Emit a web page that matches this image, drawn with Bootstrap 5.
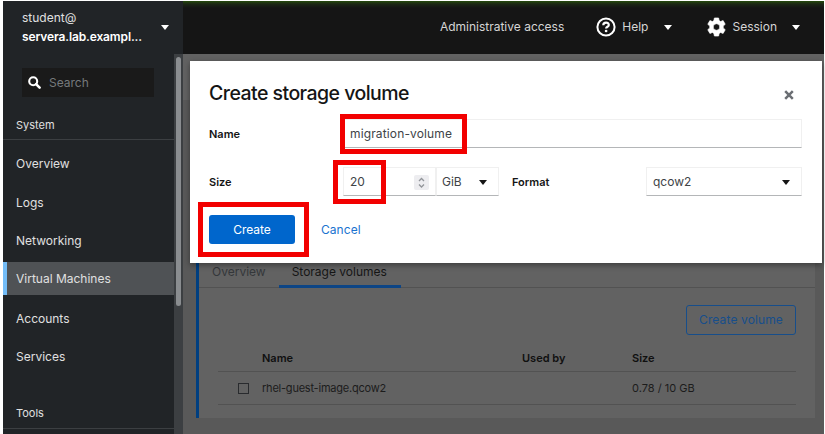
<!DOCTYPE html>
<html lang="en">
<head>
<meta charset="utf-8">
<meta name="viewport" content="width=device-width, initial-scale=1">
<title>Virtual Machines</title>
<link href="https://cdn.jsdelivr.net/npm/bootstrap@5.3.0/dist/css/bootstrap.min.css" rel="stylesheet">
<style>
body{font-family:Inter,"Open Sans",sans-serif;font-size:12px;line-height:18px;background:#fff;overflow:hidden}
.shell{width:821px;height:433px;margin:1px 0 0 3px;background:#595959}
.side{width:180px;background:#212427;color:#e0e0e0}
.host{height:53px;padding:8px 14px 0 19px;line-height:18.5px}
.host strong{color:#fff;letter-spacing:-.13px;font-weight:600}
.caret{width:0;height:0;border:4.5px solid transparent;border-top:5px solid #fff;border-bottom:0}
.host .caret{margin-top:16px}
.caret.dark{border-top-color:#151515}
.menu-pane{width:171px}
.track{width:9px;background:#3c3f42;padding:3px 2px 0}
.thumb{height:249px;background:#8a8d90;border-radius:3px}
.search{height:29px;margin:14px 20px 0 19px;background:#1a1a1a;color:#76797c;padding-left:6px}
.group-name{font-size:11px;height:43px;padding:19px 13px 0;border-bottom:1px solid #3c3f42}
.group-name.tools{height:54px;padding-top:29px}
.menu-pane .nav{padding-top:3.2px}
.menu-pane .nav-link{color:#e0e0e0;height:38.6px;line-height:42px;padding:0 13px}
.menu-pane .nav-link.active{height:33px;line-height:34px;margin:3px 0 2.6px;background:#4f5255;border-left:4px solid #73bcf7;padding-left:9px}
.top{height:53px;background:linear-gradient(#254a0c,#1c2715 3px,#151515 7px);color:#d6d6d6;padding:0 24px 1px 0}
.t-admin{margin-right:32px}
.top .ms-icon{margin-left:6px}
.crumbs{height:46px;background:#626262}
.vm-card{margin:0 9px 16px 13px;border-left:3px solid #003f80;background:#626262;flex:1;padding-top:156px}
.tabbar{height:32px;border-bottom:1px solid #525252}
.tabbar .tab-item{height:32px;line-height:32px;padding:0 13px;color:#34373a}
.tabbar .active{border-bottom:3px solid #0d4585;color:#151515;padding-right:14px}
.vol-area{padding:17px 19px 0 19px;color:#1c1c1c}
.btn-vol{width:110px;height:30px;border:1px solid #174e8b;color:#174e8b;font-size:12px;padding:0;border-radius:3px;letter-spacing:.12px}
.vol-row{display:grid;grid-template-columns:44px 260px 110px 1fr;height:33px;align-items:center;border-bottom:1px solid #525252;font-size:11px}
.vol-row .file-name{letter-spacing:-.22px}
.vol-row.heads{height:37px;font-weight:600;padding-top:9px;color:#101010}
.tick{width:11px;height:11px;border:1px solid #292b2e;margin-left:20px}
.dialog-box{position:absolute;left:190px;top:61px;width:632px;height:202px;background:#fff;padding:20px 20px 0 19px;box-shadow:0 2px 6px #0006;color:#151515}
.dialog-box h1{font-size:19.5px;line-height:24px;margin:0;font-weight:500;letter-spacing:-.54px}
.closer{margin:4px 8px 0 0}
.form-line{display:grid;align-items:center;height:29px}
.form-line label{font-size:11px;font-weight:600;padding-top:1px}
.field{height:29px;border:1px solid #f0f0f0;border-bottom:1.5px solid #b4b6b8;padding:1px 11px 0 6px;color:#404347;display:flex;align-items:center}
.line-one{grid-template-columns:134px 1fr;margin-top:14px}
.line-one .field{letter-spacing:.14px}
.line-two{grid-template-columns:134px 93px 63px 147px 156px;margin-top:19px}
.field.amount{padding-right:6px}
.field.unit{padding-left:5px}
.fmt-label{padding-left:13px}
.spin{width:15px;height:15px;background:#ededf0;border-radius:2px}
.actions{margin-top:19px}
.btn-go{width:86px;height:29px;background:#06c;color:#fff;font-size:12px;border:0;border-radius:3px;padding:0}
.btn-stop{color:#1a73cf;font-size:12px;padding:0;border:0;margin-left:26px;letter-spacing:.05px}
.ring{position:absolute;border:5px solid #f20000}
</style>
<script src="https://cdn.jsdelivr.net/npm/bootstrap@5.3.0/dist/js/bootstrap.bundle.min.js"></script>
</head>
<body>
<div class="shell d-flex">
  <aside class="side d-flex flex-column flex-shrink-0">
    <div class="host d-flex justify-content-between">
      <div><div>student@</div><strong>servera.lab.exampl...</strong></div>
      <span class="caret"></span>
    </div>
    <div class="d-flex flex-grow-1 overflow-hidden">
      <div class="menu-pane">
        <div class="search d-flex align-items-center gap-2">
          <svg width="13" height="13" viewBox="0 0 13 13" fill="none" stroke="#fff"><circle cx="5.2" cy="5.2" r="4" stroke-width="2.1"/><path d="M8.1 8.1l3.5 3.5" stroke-width="2.6" stroke-linecap="round"/></svg>
          <span>Search</span>
        </div>
        <div class="group-name">System</div>
        <nav class="nav flex-column">
          <a class="nav-link">Overview</a><a class="nav-link">Logs</a><a class="nav-link">Networking</a>
          <a class="nav-link active">Virtual Machines</a><a class="nav-link">Accounts</a><a class="nav-link">Services</a>
        </nav>
        <div class="group-name tools">Tools</div>
      </div>
      <div class="track"><div class="thumb"></div></div>
    </div>
  </aside>
  <main class="flex-grow-1 d-flex flex-column">
    <header class="top d-flex align-items-center justify-content-end">
      <span class="t-admin">Administrative access</span>
      <svg width="20" height="20" viewBox="0 0 20 20" fill="none" stroke="#fff"><circle cx="10" cy="10" r="8.6" stroke-width="2"/><path d="M7.3 8.200c0-3.500 5.500-3.400 5.500-.2 0 1.900-2.700 1.700-2.700 3.600" stroke-width="2.200"/><circle cx="10.100" cy="14" r="1.350" fill="#fff" stroke="none"/></svg>
      <span class="ms-icon">Help</span><span class="caret" style="margin-left:16px"></span>
      <svg style="margin-left:35px" width="19" height="20" viewBox="0 0 19 20"><path fill="#fff" stroke="#fff" stroke-width=".7" stroke-linejoin="round" fill-rule="evenodd" d="M7.4 1h4.2l.5 2.6 1.5.9L16.100 3.600l2.100 3.700-2 1.800v1.800l2 1.800-2.100 3.700-2.500-.9-1.500.9-.5 2.600H7.400l-.5-2.600-1.500-.9-2.500.9-2.100-3.700 2-1.800V9.100l-2-1.800 2.100-3.700 2.500.9 1.500-.9zM9.500 6.700a3.300 3.300 0 100 6.600 3.300 3.300 0 000-6.600z"/></svg>
      <span class="ms-icon">Session</span><span class="caret" style="margin-left:15px"></span>
    </header>
    <div class="crumbs"></div>
    <section class="vm-card">
      <div class="tabbar d-flex"><div class="tab-item">Overview</div><div class="tab-item active">Storage volumes</div></div>
      <div class="vol-area">
        <div class="d-flex justify-content-end"><button class="btn btn-vol">Create volume</button></div>
        <div class="vol-row heads"><span></span><span>Name</span><span>Used by</span><span>Size</span></div>
        <div class="vol-row"><span class="tick"></span><span class="file-name">rhel-guest-image.qcow2</span><span></span><span>0.78 / 10 GB</span></div>
      </div>
    </section>
  </main>
</div>

<div class="dialog-box" role="dialog">
  <div class="d-flex justify-content-between align-items-center">
    <h1>Create storage volume</h1>
    <svg class="closer" width="10" height="10" viewBox="0 0 10 10"><path d="M1.200 1.200l7.600 7.600m0-7.600L1.200 8.800" stroke="#6a6e73" stroke-width="2.500"/></svg>
  </div>
  <div class="form-line line-one"><label>Name</label><div class="field">migration-volume</div></div>
  <div class="form-line line-two">
    <label>Size</label>
    <div class="field amount justify-content-between">20<span class="spin d-flex"><svg width="15" height="15" fill="none" stroke="#92959a" stroke-width="1.300"><path d="M5 6l2.500-2.500L10 6M5 9.500L7.500 12 10 9.500"/></svg></span></div>
    <div class="field unit justify-content-between">GiB<span class="caret dark"></span></div>
    <label class="fmt-label">Format</label>
    <div class="field justify-content-between">qcow2<span class="caret dark"></span></div>
  </div>
  <div class="actions d-flex"><button class="btn btn-go">Create</button><button class="btn btn-stop">Cancel</button></div>
</div>
<div class="ring" style="left:340px;top:114px;width:127px;height:40px"></div>
<div class="ring" style="left:333px;top:160px;width:53px;height:44px"></div>
<div class="ring" style="left:198px;top:202px;width:111px;height:55px"></div>
</body>
</html>
